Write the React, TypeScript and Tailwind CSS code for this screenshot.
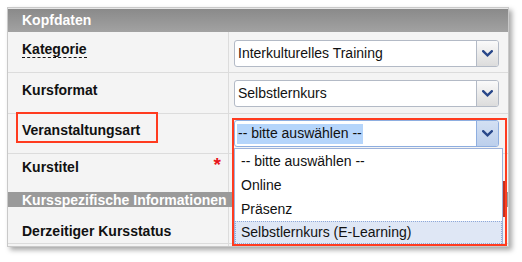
import React from "react";

const Chevron = () => (
  <svg width="11" height="7" viewBox="0 0 11 7">
    <path d="M1.2 1.2 L5.5 5.3 L9.8 1.2" fill="none" stroke="#28478a" strokeWidth="2.3" strokeLinecap="square" />
  </svg>
);

function Select({ value, focused }: { value: string; focused?: boolean }) {
  return (
    <div
      className={
        "flex h-[27px] w-[265px] rounded-[3px] border bg-white " +
        (focused ? "border-[#8eaee0]" : "border-[#b3bac6]")
      }
    >
      <div className="flex flex-1 items-center pl-[2px] text-[14px] text-[#111]">
        {focused ? (
          <span className="flex h-[20px] items-center bg-[#b5d5fb] px-[1px]">{value}</span>
        ) : (
          <span className="pl-[1px]">{value}</span>
        )}
      </div>
      <div
        className={
          "flex w-[22px] items-center justify-center rounded-r-[2px] border-l " +
          (focused
            ? "border-[#8eaee0] bg-gradient-to-b from-[#d3e0f3] to-[#bccfec]"
            : "border-[#b3bac6] bg-gradient-to-b from-[#fafafa] to-[#dcdcdc]")
        }
      >
        <Chevron />
      </div>
    </div>
  );
}

export default function App() {
  const label = "text-[14px] font-bold text-[#111] leading-[16px]";
  return (
    <div className="relative h-[262px] w-[522px] overflow-hidden bg-white pl-[7px] pt-[7px] font-['Liberation_Sans',Arial,sans-serif]">
      <div className="h-[240px] w-[502px] overflow-hidden border border-[#c9c9c9] bg-[#f4f4f4] shadow-[3px_3px_5px_rgba(0,0,0,0.35)]">
        <div className="h-[1px] bg-[#e6e6e6]" />
        <div className="flex h-[23px] items-center bg-gradient-to-b from-[#8a8a8a] to-[#a2a2a2] pl-[14px] text-[14px] font-bold text-white">
          Kopfdaten
        </div>

        <div className="grid h-[41px] grid-cols-[221px_1fr] border-b border-[#dcdcdc]">
          <div className="border-r border-[#dcdcdc] pl-[14px] pt-[5px]">
            <span className={label + " border-b border-dashed border-[#111]"}>Kategorie</span>
          </div>
          <div className="pl-[5px] pt-[8px]">
            <Select value="Interkulturelles Training" />
          </div>
        </div>

        <div className="grid h-[41px] grid-cols-[221px_1fr] border-b border-[#dcdcdc]">
          <div className="border-r border-[#dcdcdc] pl-[14px] pt-[5px]">
            <span className={label}>Kursformat</span>
          </div>
          <div className="pl-[5px] pt-[7px]">
            <Select value="Selbstlernkurs" />
          </div>
        </div>

        <div className="grid h-[40px] grid-cols-[221px_1fr] border-b border-[#dcdcdc]">
          <div className="border-r border-[#dcdcdc] pl-[14px] pt-[4px]">
            <span className={label}>Veranstaltungsart</span>
          </div>
          <div className="pl-[5px] pt-[6px]">
            <Select value="-- bitte auswählen --" focused />
          </div>
        </div>

        <div className="grid h-[38px] grid-cols-[221px_1fr]">
          <div className="flex justify-between border-r border-[#dcdcdc] pl-[14px] pr-[7px] pt-[5px]">
            <span className={label}>Kurstitel</span>
            <span className="mt-[-4px] text-[19px] font-bold leading-[19px] text-[#e8161b]">*</span>
          </div>
          <div />
        </div>

        <div className="flex h-[15px] items-start bg-[#9a9a9a] pl-[14px] text-[14px] font-bold leading-[14px] text-white">
          <span className="translate-y-[1px]">Kursspezifische Informationen</span>
        </div>

        <div className="grid h-[37px] grid-cols-[221px_1fr] border-b border-[#dcdcdc]">
          <div className="border-r border-[#dcdcdc] pl-[14px] pt-[12px]">
            <span className={label}>Derzeitiger Kursstatus</span>
          </div>
          <div />
        </div>
        <div className="grid h-[2px] grid-cols-[221px_1fr]">
          <div className="border-r border-[#dcdcdc]" />
          <div />
        </div>
      </div>

      {/* dropdown list */}
      <div className="absolute left-[234px] top-[148px] h-[96px] w-[269px] border border-[#9db2da] bg-white text-[14px] text-[#111]">
        <div className="flex h-[24px] items-center pl-[6px]">-- bitte auswählen --</div>
        <div className="flex h-[24px] items-center pl-[6px]">Online</div>
        <div className="flex h-[24px] items-center pl-[6px]">Präsenz</div>
        <div className="flex h-[23px] items-center border border-dotted border-[#8ea8d8] bg-[#dfe7f5] pl-[5px]">
          Selbstlernkurs (E-Learning)
        </div>
      </div>

      {/* annotation boxes */}
      <div className="absolute left-[16px] top-[112px] h-[31px] w-[142px] border-2 border-[#ff3b1f]" />
      <div className="absolute left-[232px] top-[118px] h-[128px] w-[275px] border-2 border-[#ff3b1f]" />
      <div className="absolute left-[503px] top-[181px] h-[36px] w-[2px] bg-[#c2301e]" />
    </div>
  );
}
